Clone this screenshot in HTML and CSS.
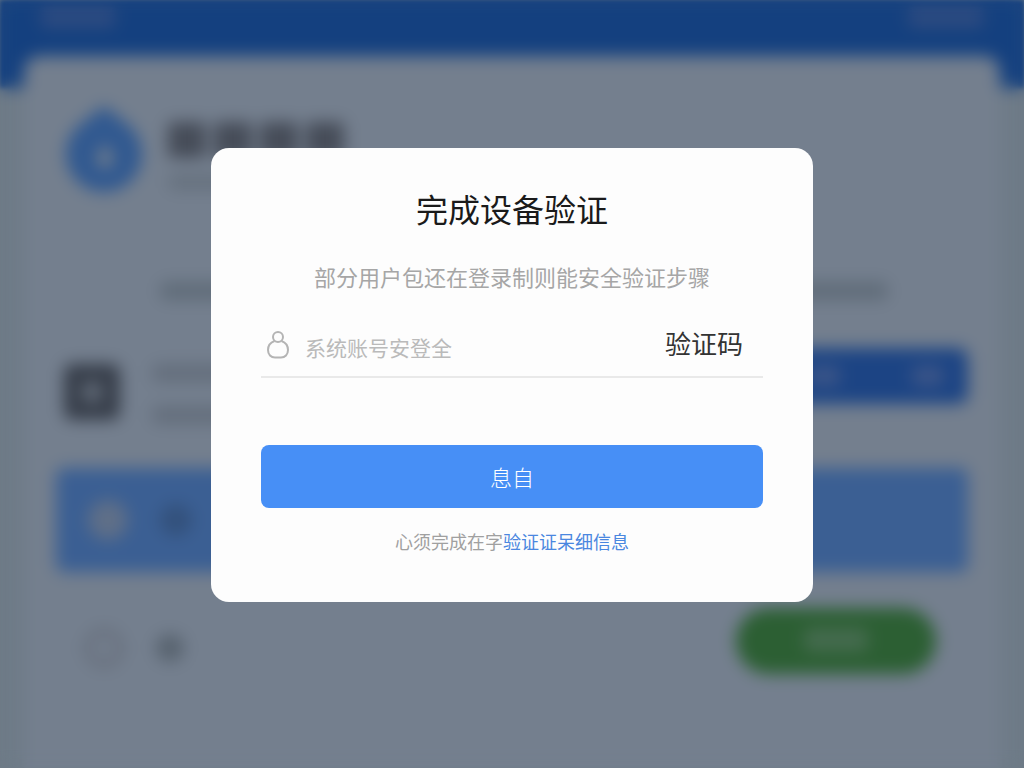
FILE: index.html
```
<!DOCTYPE html>
<html lang="zh-CN">
<head>
    <meta charset="UTF-8">
    <meta name="viewport" content="width=device-width, initial-scale=1.0">
    <title>完成设备验证</title>
    <link rel="stylesheet" href="styles.css">
</head>
<body>
    <!-- Page behind the dialog -->
    <div class="page" aria-hidden="true">
        <div class="topbar">
            <span class="bar bar-nav"></span>
            <span class="bar bar-nav"></span>
        </div>
        <div class="sheet">
            <div class="brand">
                <svg class="brand-logo" viewBox="0 0 80 88">
                    <path fill-rule="evenodd" d="M40 0 L62 17 A38 38 0 1 1 18 17 Z M41 38 C36 44 33 48 33 54 A8 8 0 0 0 49 54 C49 48 46 44 41 38 Z"/>
                </svg>
                <div class="brand-text">
                    <div class="brand-name"><i></i><i></i><i></i><i></i></div>
                    <span class="bar bar-sub"></span>
                </div>
            </div>
            <div class="tabs">
                <span class="bar bar-tab"></span>
                <span class="bar bar-tab"></span>
            </div>
            <div class="item">
                <div class="item-icon"><i></i></div>
                <div class="item-lines">
                    <span class="bar bar-line"></span>
                    <span class="bar bar-line"></span>
                </div>
                <div class="item-action"><i></i><i></i></div>
            </div>
            <div class="banner">
                <i class="banner-coin"></i>
                <i class="banner-dot"></i>
            </div>
            <div class="footer">
                <div class="footer-icons">
                    <i class="footer-ring"></i>
                    <i class="footer-dot"></i>
                </div>
                <div class="footer-action"><i></i></div>
            </div>
        </div>
    </div>

    <!-- Dialog -->
    <div class="overlay">
        <form class="modal" role="dialog" aria-labelledby="modal-title">
            <h1 class="modal-title" id="modal-title">完成设备验证</h1>
            <p class="modal-desc">部分用户包还在登录制则能安全验证步骤</p>
            <div class="field">
                <label class="field-label" for="account" aria-label="系统账号">
                    <svg class="field-icon" viewBox="0 0 22 28">
                        <circle cx="11" cy="6" r="5"/>
                        <path d="M7.500 10 C3.500 11.500 1 15 1 19 C1 23.500 4 26.500 8 26.500 H14 C18 26.500 21 23.500 21 19 C21 15 18.500 11.500 14.500 10"/>
                    </svg>
                </label>
                <input class="field-input" id="account" type="text" placeholder="系统账号安登全">
                <button class="code-btn" type="button">验证码</button>
            </div>
            <button class="submit-btn" type="submit">息自</button>
            <p class="modal-note">心须完成在字<a href="#">验证证呆细信息</a></p>
        </form>
    </div>
</body>
</html>
```
FILE: styles.css
```
/* Reset and base styles */
* {
    margin: 0;
    padding: 0;
    box-sizing: border-box;
}

body {
    min-height: 100vh;
    overflow: hidden;
    background-color: #6e7b87;
    color: #1a1a1a;
    font-family: "Noto Sans CJK SC", "Noto Sans", sans-serif;
}

button,
input {
    border: none;
    background: none;
    font-family: inherit;
}

/* Page behind the dialog */
.page {
    min-height: 100vh;
    background: linear-gradient(#14407f 88px, #6e7b87 88px);
    filter: blur(2px);
}

.bar {
    display: block;
    border-radius: 6px;
}

.topbar {
    display: flex;
    justify-content: space-between;
    height: 56px;
    padding: 8px 40px;
}

.bar-nav {
    width: 76px;
    height: 20px;
    background-color: #2d4b80;
}

.sheet {
    min-height: calc(100vh - 56px);
    margin: 0 24px;
    padding: 48px 32px 0;
    border-radius: 16px 16px 0 0;
    background-color: #747f8e;
}

.brand {
    display: flex;
    gap: 24px;
    height: 176px;
    padding-left: 8px;
}

.brand-logo {
    width: 80px;
    height: 92px;
    fill: #315990;
}

.brand-text {
    padding-top: 18px;
}

.brand-name {
    display: flex;
    gap: 8px;
    margin-bottom: 16px;
}

.brand-name i {
    width: 38px;
    height: 36px;
    border-radius: 4px;
    background-color: #464c58;
}

.bar-sub {
    width: 160px;
    height: 16px;
    background-color: #66717e;
}

.tabs {
    display: flex;
    justify-content: space-between;
    height: 68px;
    padding: 2px 80px 0 104px;
}

.bar-tab {
    width: 120px;
    height: 18px;
    background-color: #606c79;
}

.item {
    display: flex;
    height: 120px;
    padding-left: 8px;
}

.item-icon {
    width: 56px;
    height: 56px;
    margin: 16px 32px 0 0;
    padding: 18px;
    border-radius: 8px;
    background-color: #363d49;
}

.item-icon i {
    display: block;
    height: 20px;
    background-color: #5f6875;
}

.item-lines {
    flex: 1;
    padding-top: 16px;
}

.bar-line {
    width: 140px;
    height: 18px;
    margin-bottom: 24px;
    background-color: #646e7c;
}

.item-action {
    display: flex;
    justify-content: space-between;
    align-items: center;
    width: 240px;
    height: 56px;
    padding: 0 24px 0 80px;
    border-radius: 10px;
    background-color: #1c4484;
}

.item-action i {
    width: 32px;
    height: 20px;
    border-radius: 6px;
    background-color: #3b5588;
}

.banner {
    display: flex;
    align-items: center;
    gap: 32px;
    height: 104px;
    margin-bottom: 36px;
    padding-left: 32px;
    border-radius: 8px;
    background-color: #3b5f93;
}

.banner-coin,
.banner-dot,
.footer-ring,
.footer-dot {
    width: 40px;
    height: 40px;
    border-radius: 50%;
}

.banner-coin {
    background-color: #5f6f88;
}

.banner-dot {
    width: 32px;
    height: 32px;
    background-color: #33517c;
}

.footer {
    display: flex;
    justify-content: space-between;
    padding: 0 32px 0 28px;
}

.footer-icons {
    display: flex;
    align-items: center;
    gap: 32px;
    padding-top: 14px;
}

.footer-ring {
    border: 8px solid #676f7c;
}

.footer-dot {
    width: 28px;
    height: 28px;
    background-color: #58636f;
}

.footer-action {
    width: 200px;
    height: 66px;
    padding: 20px 68px;
    border-radius: 33px;
    background-color: #2c5f33;
}

.footer-action i {
    display: block;
    height: 24px;
    border-radius: 6px;
    background-color: #446b4e;
}

/* Overlay with blur effect */
.overlay {
    position: fixed;
    inset: 0;
    display: flex;
    justify-content: center;
    align-items: center;
    padding-bottom: 18px;
    backdrop-filter: blur(8px);
}

/* Modal */
.modal {
    width: 602px;
    max-width: 100%;
    padding: 36px 50px 46px;
    border-radius: 18px;
    background-color: #fdfdfd;
    text-align: center;
}

.modal-title {
    margin-bottom: 26px;
    font-size: 32px;
    font-weight: 400;
    line-height: 48px;
}

.modal-desc {
    margin-bottom: 24px;
    color: #a6a6a6;
    font-size: 22px;
    font-weight: 400;
    line-height: 36px;
}

.field {
    display: flex;
    align-items: center;
    height: 60px;
    margin-bottom: 67px;
    padding: 0 20px 4px 6px;
    border-bottom: 2px solid #e9e9e9;
}

.field-label {
    display: flex;
    margin-right: 16px;
}

.field-icon {
    width: 22px;
    height: 28px;
    fill: none;
    stroke: #b4b4b4;
    stroke-width: 2;
}

.field-input {
    flex: 1;
    min-width: 0;
    padding-top: 4px;
    color: #333;
    font-size: 21px;
    outline: none;
}

.field-input::placeholder {
    color: #bababa;
}

.code-btn {
    padding-bottom: 4px;
    color: #333;
    font-size: 26px;
    line-height: 36px;
    cursor: pointer;
}

.submit-btn {
    display: block;
    width: 100%;
    height: 63px;
    padding-bottom: 2px;
    margin-bottom: 18px;
    border-radius: 8px;
    background-color: #478ff6;
    color: #fff;
    font-size: 22px;
    font-weight: 300;
    cursor: pointer;
}

.modal-note {
    color: #a0a0a0;
    font-size: 18px;
    line-height: 30px;
}

.modal-note a {
    color: #4a87e0;
    text-decoration: none;
}
```
